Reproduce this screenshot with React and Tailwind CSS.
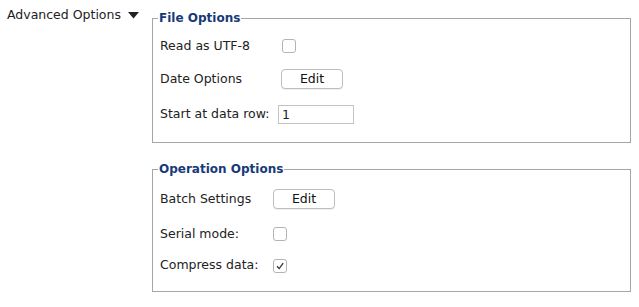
import React from "react";

// Small mac-style checkbox
function Check({ checked = false, className = "" }) {
  return (
    <span
      className={`flex h-[14px] w-[14px] items-center justify-center rounded-[3px] border border-[#b4b4b4] bg-white ${className}`}
    >
      {checked && (
        <svg width="10" height="10" viewBox="0 0 10 10">
          <path d="M2 5.2 L4.2 7.6 L8.2 2.2" fill="none" stroke="#333" strokeWidth="1.3" />
        </svg>
      )}
    </span>
  );
}

function EditButton({ className = "" }) {
  return (
    <button
      className={`h-[20px] w-[62px] rounded-[4px] border border-[#bdbdbd] bg-white text-[12.5px] leading-none text-[#111] shadow-[0_1px_0_rgba(0,0,0,0.06)] ${className}`}
    >
      Edit
    </button>
  );
}

function Group({ title, children, className = "" }) {
  return (
    <fieldset className={`w-[479px] border border-[#a6a6a6] ${className}`}>
      <legend className="ml-[5px] px-[1px] text-[12px] font-bold leading-[16px] text-[#173a78]">
        {title}
      </legend>
      <div className="px-[7px]">{children}</div>
    </fieldset>
  );
}

export default function App() {
  return (
    <div className="flex h-[307px] w-[639px] bg-white font-['DejaVu_Sans',sans-serif] text-[12.5px] text-[#222]">
      <div className="flex h-fit w-[152px] items-center pl-[7px] pt-[6px]">
        <span>Advanced Options</span>
        <svg className="ml-[7px]" width="11" height="7" viewBox="0 0 11 7">
          <polygon points="0,0 11,0 5.5,6.5" fill="#222" />
        </svg>
      </div>

      <div className="flex flex-col pt-[10px]">
        <Group title="File Options" className="pb-[13px]">
          <div className="mt-[6px] flex h-[28px] items-center">
            <span className="w-[122px]">Read as UTF-8</span>
            <Check />
          </div>
          <div className="mt-[5px] flex h-[28px] items-center">
            <span className="w-[121px]">Date Options</span>
            <EditButton />
          </div>
          <div className="mt-[7px] flex h-[29px] items-center">
            <span className="w-[118px]">Start at data row:</span>
            <input
              defaultValue="1"
              className="h-[19px] w-[76px] border border-[#c4c4c4] px-[3px] text-[12.5px] leading-none outline-none"
            />
          </div>
        </Group>

        <Group title="Operation Options" className="mt-[18px] pb-[11px]">
          <div className="mt-[8px] flex h-[28px] items-center">
            <span className="w-[113px]">Batch Settings</span>
            <EditButton />
          </div>
          <div className="mt-[7px] flex h-[28px] items-center">
            <span className="w-[113px]">Serial mode:</span>
            <Check />
          </div>
          <div className="mt-[3px] flex h-[29px] items-center">
            <span className="w-[113px]">Compress data:</span>
            <Check checked />
          </div>
        </Group>
      </div>
    </div>
  );
}
